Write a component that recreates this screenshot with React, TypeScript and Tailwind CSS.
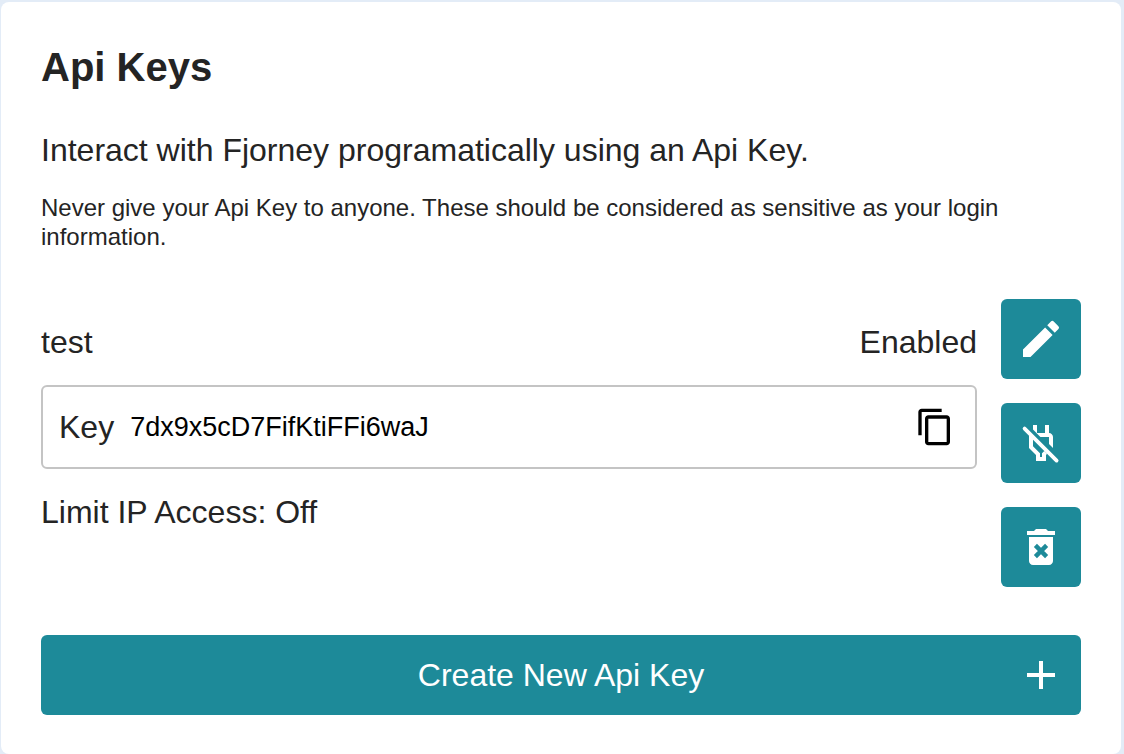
import type { ReactNode } from "react";
import { MdAdd, MdContentCopy, MdEdit } from "react-icons/md";

function PlugOffIcon() {
  return (
    <svg viewBox="0 0 24 24" aria-hidden="true" className="size-12">
      <path
        fill="currentColor"
        d="M8 3h2v4.300L8 5.300V3zM14 3h2v4c1.100 0 2 .9 2 2v5.500l-2-2V9h-4.300l-2-2H14V3zM6 8l2 2v3.650l3.500 3.520V19h1v-1.830l1.150-1.150 1.400 1.400-.55.580v3h-5v-3L6 14.500V8z"
      />
      <path stroke="currentColor" strokeWidth="1.900" strokeLinecap="round" d="M3.800 4.800l16 16" />
    </svg>
  );
}

function TrashIcon() {
  return (
    <svg viewBox="0 0 24 24" aria-hidden="true" className="size-12">
      <path
        fill="currentColor"
        d="M19 4h-3.500l-1-1h-5l-1 1H5v2h14V4zM6 19c0 1.100.9 2 2 2h8c1.100 0 2-.9 2-2V7H6v12z"
      />
      <path stroke="#1d8a99" strokeWidth="2.200" d="M9.200 11.200l5.600 5.600M14.800 11.200l-5.600 5.600" />
    </svg>
  );
}

function ActionButton({ label, children }: { label: string; children: ReactNode }) {
  return (
    <button
      type="button"
      aria-label={label}
      className="flex size-20 items-center justify-center rounded-md bg-[#1d8a99] text-white"
    >
      {children}
    </button>
  );
}

export default function App() {
  return (
    <div className="min-h-screen bg-[#e3ecf7] pt-0.5 pr-[3px] pl-px font-['Liberation_Sans',Arial,sans-serif] text-[#242424]">
      <main className="min-h-[calc(100vh-2px)] rounded-lg bg-white px-10 pt-[39px] pb-[39px]">
        <h1 className="text-[40px] leading-[52px] font-bold">Api Keys</h1>
        <p className="mt-[37px] text-[32px] leading-10">Interact with Fjorney programatically using an Api Key.</p>
        <p className="mt-[23px] text-[24px] leading-[29px]">
          Never give your Api Key to anyone. These should be considered as sensitive as your login information.
        </p>
        <section className="mt-12 flex gap-6">
          <div className="min-w-0 flex-1 pt-[23px]">
            <div className="flex justify-between text-[32px] leading-10">
              <h2>test</h2>
              <span>Enabled</span>
            </div>
            <div className="mt-[23px] flex h-21 items-center rounded-md border-2 border-[#c4c4c4] pr-5 pl-4">
              <label htmlFor="key" className="text-[32px] leading-10">
                Key
              </label>
              <input
                id="key"
                readOnly
                value="7dx9x5cD7FifKtiFFi6waJ"
                className="ml-4 min-w-0 flex-1 text-[27px] leading-10 text-black outline-none"
              />
              <button type="button" aria-label="Copy key" className="text-black">
                <MdContentCopy className="size-10" />
              </button>
            </div>
            <p className="mt-[23px] text-[32px] leading-10">Limit IP Access: Off</p>
          </div>
          <div className="flex flex-col gap-6">
            <ActionButton label="Edit key">
              <MdEdit className="size-12" />
            </ActionButton>
            <ActionButton label="Disable key">
              <PlugOffIcon />
            </ActionButton>
            <ActionButton label="Delete key">
              <TrashIcon />
            </ActionButton>
          </div>
        </section>
        <button
          type="button"
          className="mt-12 grid h-20 w-full grid-cols-[1fr_auto_1fr] items-center rounded-md bg-[#1d8a99] px-4 text-[32px] leading-10 text-white"
        >
          <span className="col-start-2">Create New Api Key</span>
          <MdAdd className="size-12 justify-self-end" />
        </button>
      </main>
    </div>
  );
}
